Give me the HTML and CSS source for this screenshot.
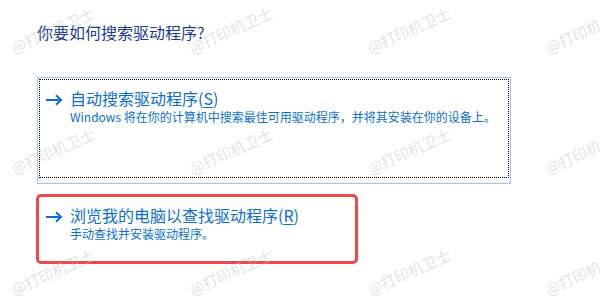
FILE: index.html
```html
<!DOCTYPE html>
<html lang="zh-CN">
<head>
<meta charset="utf-8">
<link rel="stylesheet" href="styles.css">
</head>
<body>
<main class="page">
  <h1 class="question">你要如何搜索驱动程序?</h1>
  <div class="option option-focus">
    <div class="focus-ring">
      <div class="opt-row">
        <svg class="arrow" width="18" height="12" viewBox="0 0 18 12"><path d="M1 6H16M11 1.2L16 6L11 10.8" fill="none" stroke="#0a6fd4" stroke-width="2"/></svg>
        <div class="opt-text">
          <div class="opt-title">自动搜索驱动程序(<u>S</u>)</div>
          <div class="opt-desc">Windows 将在你的计算机中搜索最佳可用驱动程序，并将其安装在你的设备上。</div>
        </div>
      </div>
    </div>
  </div>
  <div class="option option-marked">
    <div class="opt-row">
      <svg class="arrow" width="18" height="12" viewBox="0 0 18 12"><path d="M1 6H16M11 1.2L16 6L11 10.8" fill="none" stroke="#0a6fd4" stroke-width="2"/></svg>
      <div class="opt-text">
        <div class="opt-title">浏览我的电脑以查找驱动程序(<u>R</u>)</div>
        <div class="opt-desc">手动查找并安装驱动程序。</div>
      </div>
    </div>
  </div>
</main>
<div class="watermarks">
  <span>@打印机卫士</span><span>@打印机卫士</span><span>@打印机卫士</span><span>@打印机卫士</span>
  <span>@打印机卫士</span><span>@打印机卫士</span><span>@打印机卫士</span><span>@打印机卫士</span>
  <span>@打印机卫士</span><span>@打印机卫士</span><span>@打印机卫士</span><span>@打印机卫士</span>
</div>
</body>
</html>
```

FILE: styles.css
```css
html, body {
  margin: 0;
  padding: 0;
  background: #ffffff;
  width: 600px;
  height: 300px;
  overflow: hidden;
}
body {
  font-family: "Noto Sans CJK SC", "Noto Sans", sans-serif;
  position: relative;
}
.page {
  padding: 20px 0 0 37px;
  display: flex;
  flex-direction: column;
  align-items: flex-start;
}
.question {
  margin: 0;
  font-size: 16px;
  font-weight: normal;
  line-height: 24px;
  color: #1d3a96;
}
.option-focus {
  margin-top: 33px;
  width: 470px;
  height: 103px;
  border: 1px solid #9ac8ee;
  padding: 1px;
  box-sizing: content-box;
}
.focus-ring {
  height: 99px;
  border: 1px dotted #000000;
  padding: 7px 0 0 5px;
  box-sizing: border-box;
}
.opt-row {
  display: flex;
  align-items: flex-start;
  gap: 7px;
}
.arrow {
  margin-top: 7px;
  flex: none;
}
.opt-title {
  font-size: 16px;
  line-height: 22px;
  color: #0a6fd4;
}
.opt-title u {
  text-underline-offset: 2px;
}
.opt-desc {
  font-size: 12px;
  line-height: 16px;
  color: #0a6fd4;
}
.option-marked {
  margin-top: 10px;
  margin-left: -1px;
  width: 322px;
  height: 70px;
  border: 3px solid #f04848;
  border-radius: 5px;
  box-sizing: border-box;
  padding: 7px 0 0 6px;
}
.watermarks {
  position: absolute;
  left: 0;
  top: 0;
  width: 600px;
  height: 300px;
  overflow: hidden;
  padding: 6px 0 0 8px;
  box-sizing: border-box;
  display: grid;
  grid-template-columns: repeat(4, 178px);
  grid-auto-rows: 121px;
  pointer-events: none;
}
.watermarks span {
  display: block;
  width: 90px;
  height: 48px;
  line-height: 48px;
  text-align: center;
  font-size: 15px;
  color: rgba(190, 190, 190, 0.45);
  transform: rotate(-24deg);
  white-space: nowrap;
}
```
